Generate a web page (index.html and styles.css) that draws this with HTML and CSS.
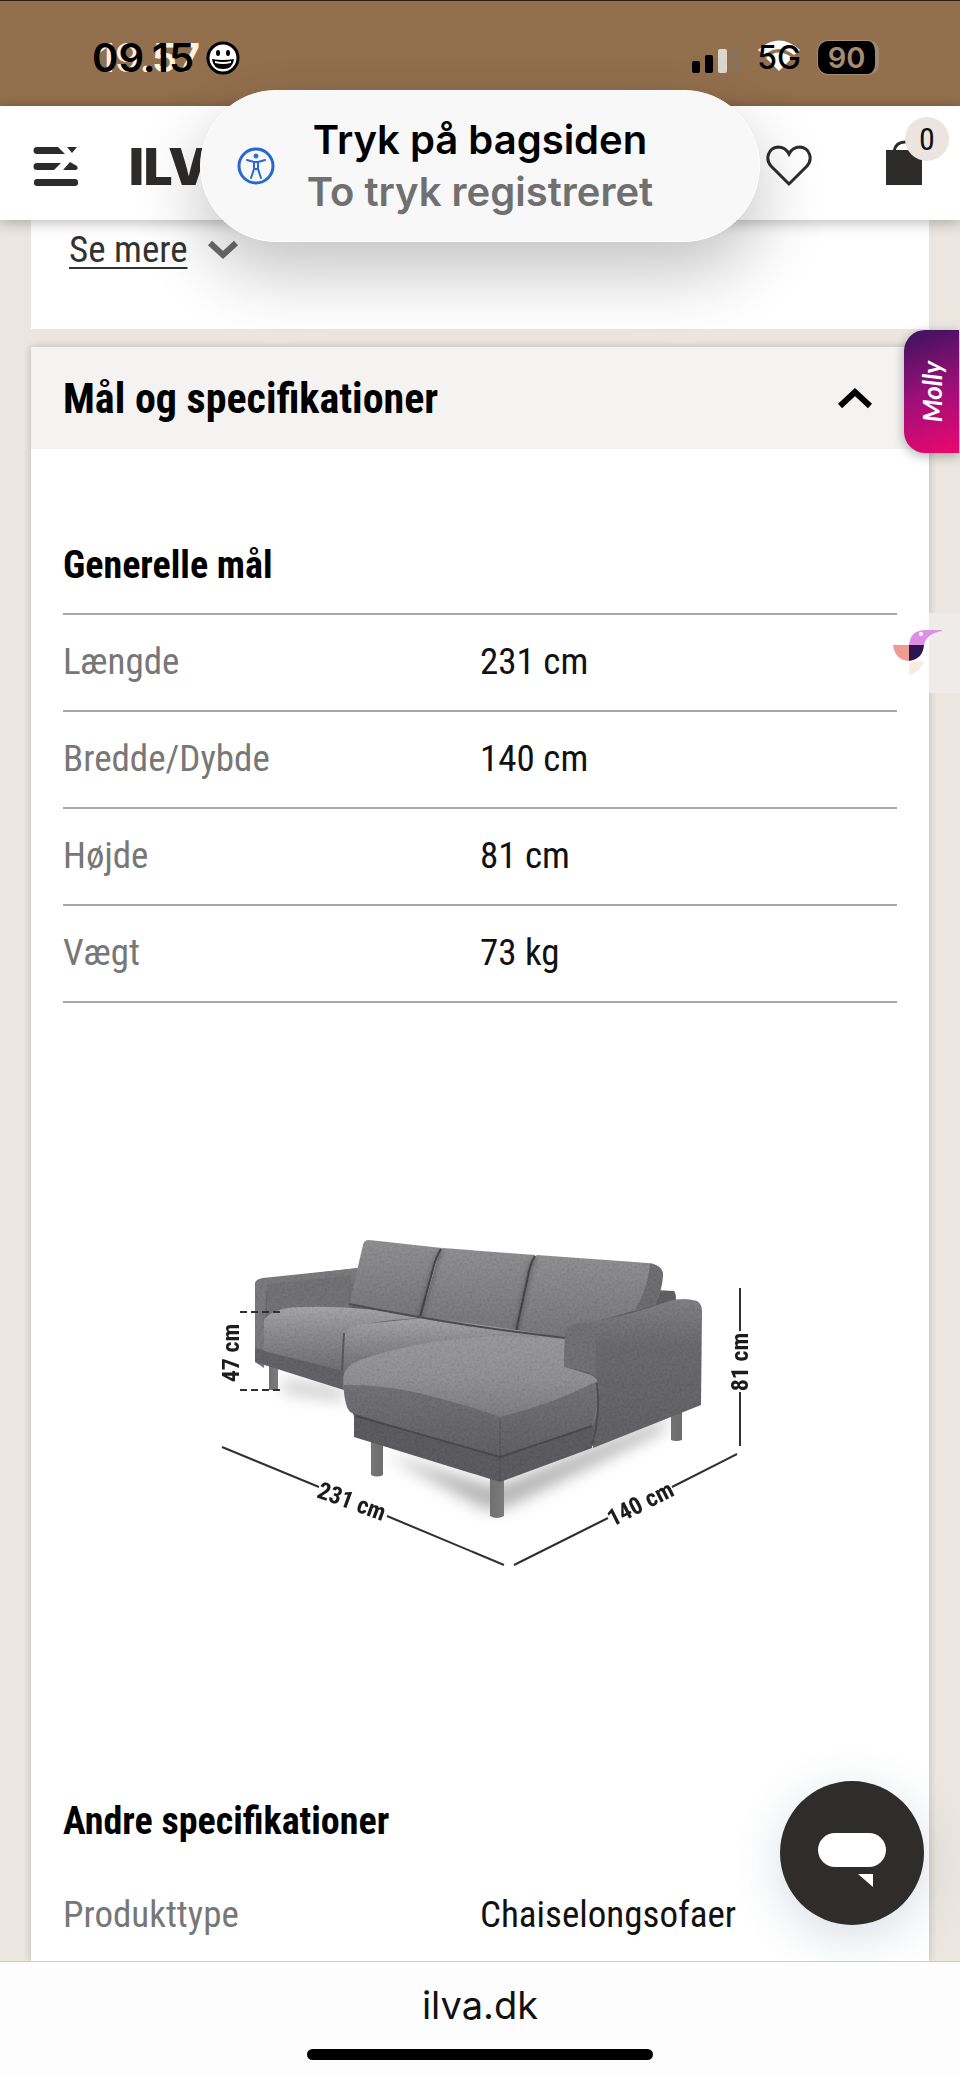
FILE: index.html
```html
<!DOCTYPE html>
<html lang="da">
<head>
    <meta charset="UTF-8">
    <meta name="viewport" content="width=device-width, initial-scale=1.0">
    <title>ILVA - Mål og specifikationer</title>
    <link rel="stylesheet" href="styles.css">
</head>
<body>
    <div class="status-bar">
        <div class="status-left">
            <span class="time"><span class="time-ghost" aria-hidden="true">19.57</span><span class="time-now">09.15</span></span>
            <svg class="smiley" viewBox="0 0 34 34" aria-hidden="true">
                <circle cx="17" cy="17" r="15" fill="#fff" stroke="#000" stroke-width="3"/>
                <ellipse cx="12" cy="12" rx="2" ry="3"/>
                <ellipse cx="22" cy="12" rx="2" ry="3"/>
                <path d="M6 18q11 2 22 0q-1 10-11 10T6 18z"/>
                <path d="M9 20q8 2 16 0v2q-8 2-16 0z" fill="#fff"/>
            </svg>
        </div>
        <div class="status-right">
            <svg class="signal" viewBox="0 0 50 32" aria-hidden="true">
                <rect x="1" y="19" width="8" height="12" rx="2"/>
                <rect x="14" y="13" width="8" height="18" rx="2"/>
                <rect x="27" y="7" width="9" height="24" rx="2" fill="#dcd7cd"/>
                <rect x="41" y="1" width="8" height="30" rx="2" fill="#8b7156"/>
            </svg>
            <span class="network">
                <svg class="wifi" viewBox="0 0 44 32" aria-hidden="true">
                    <path d="M1 10Q22-9 43 10L37 15Q22 3 7 15z" fill="#fff"/>
                    <path d="M9 18q13-11 26 0L22 31z" fill="#fff"/>
                </svg>
                <span class="network-label">5G</span>
            </span>
            <span class="battery">90</span>
        </div>
    </div>

    <header class="site-header">
        <button type="button" class="icon-button" aria-label="Menu">
            <svg width="46" height="40" viewBox="0 0 46 40" fill="#2d2c2b">
                <path d="M4 1h21l7 7H4a3 3 0 0 1 0-7zM34 1h10l-5 6z"/>
                <path d="M4 17h24l-7 7H4a3 3 0 0 1 0-7zM37 16l7 4q2 4-2 4H30z"/>
                <rect x="1" y="33" width="44" height="7" rx="3"/>
            </svg>
        </button>
        <a href="#" class="logo">ILVA</a>
        <button type="button" class="icon-button wishlist" aria-label="Ønskeliste">
            <svg width="46" height="42" viewBox="0 0 46 42" fill="none" stroke="#2d2c2b" stroke-width="3">
                <path d="M23 39L5 21C-1 14 2 3 12 2c5 0 9 3 11 7c2-4 6-7 11-7c10 1 13 12 7 19z"/>
            </svg>
        </button>
        <button type="button" class="icon-button cart" aria-label="Kurv">
            <svg width="36" height="46" viewBox="0 0 36 46">
                <rect y="11" width="36" height="35" fill="#2d2c2b"/>
                <path d="M8 12q2-9 11-9q8 0 10 9" fill="none" stroke="#2d2c2b" stroke-width="3"/>
            </svg>
            <span class="cart-count">0</span>
        </button>
    </header>

    <main class="page">
        <section class="card description">
            <a href="#" class="see-more">Se mere</a>
            <svg width="32" height="22" viewBox="0 0 32 22" fill="none" stroke="#6d6d6d" stroke-width="6" aria-hidden="true">
                <path d="M3 4l13 12L29 4"/>
            </svg>
        </section>

        <section class="card specs">
            <h2 class="accordion">
                <button type="button" class="accordion-button" aria-expanded="true">
                    Mål og specifikationer
                    <svg width="34" height="22" viewBox="0 0 34 22" fill="none" stroke="#000" stroke-width="6" aria-hidden="true">
                        <path d="M2 19L17 5l15 14"/>
                    </svg>
                </button>
            </h2>
            <div class="accordion-content">
                <h3>Generelle mål</h3>
                <table class="spec-table lined">
                    <tr><th scope="row">Længde</th><td>231 cm</td></tr>
                    <tr><th scope="row">Bredde/Dybde</th><td>140 cm</td></tr>
                    <tr><th scope="row">Højde</th><td>81 cm</td></tr>
                    <tr><th scope="row">Vægt</th><td>73 kg</td></tr>
                </table>

                <figure class="drawing">
                    <svg viewBox="190 1220 580 360" role="img" aria-label="Sofa med mål">
                        <defs>
                            <linearGradient id="cushion" x1="0" y1="0" x2="0" y2="1">
                                <stop offset="0" stop-color="#919193"/>
                                <stop offset="1" stop-color="#78787b"/>
                            </linearGradient>
                            <linearGradient id="seat" x1="0" y1="0" x2="0" y2="1">
                                <stop offset="0" stop-color="#a6a6a8"/>
                                <stop offset="0.4" stop-color="#8e8e90"/>
                                <stop offset="1" stop-color="#6f6f72"/>
                            </linearGradient>
                            <linearGradient id="chaise" x1="0" y1="0" x2="0" y2="1">
                                <stop offset="0" stop-color="#9a9a9c"/>
                                <stop offset="0.35" stop-color="#929294"/>
                                <stop offset="0.65" stop-color="#808083"/>
                                <stop offset="1" stop-color="#66666a"/>
                            </linearGradient>
                            <linearGradient id="arm" x1="0" y1="0" x2="0" y2="1">
                                <stop offset="0" stop-color="#828285"/>
                                <stop offset="0.3" stop-color="#6c6c6f"/>
                                <stop offset="1" stop-color="#626265"/>
                            </linearGradient>
                            <linearGradient id="leg">
                                <stop offset="0" stop-color="#707070"/>
                                <stop offset="0.4" stop-color="#a9a9a9"/>
                                <stop offset="1" stop-color="#6c6c6c"/>
                            </linearGradient>
                            <filter id="soft" x="-20%" y="-20%" width="140%" height="140%">
                                <feGaussianBlur stdDeviation="8"/>
                            </filter>
                            <filter id="crease" x="-20%" y="-20%" width="140%" height="140%">
                                <feGaussianBlur stdDeviation="2"/>
                            </filter>
                            <filter id="fabric" x="0" y="0" width="100%" height="100%">
                                <feTurbulence type="fractalNoise" baseFrequency="0.4" numOctaves="2" result="noise"/>
                                <feColorMatrix in="noise" values="0 0 0 0 0  0 0 0 0 0  0 0 0 0 0  0.4 0 0 0 -0.15" result="grain"/>
                                <feComposite in="grain" in2="SourceGraphic" operator="in" result="weave"/>
                                <feMerge><feMergeNode in="SourceGraphic"/><feMergeNode in="weave"/></feMerge>
                            </filter>
                        </defs>

                        <!-- floor shadow -->
                        <g filter="url(#soft)" fill="#000">
                            <path d="M282 1380l62 8v14l-60-8z" opacity="0.2"/>
                            <path d="M385 1455l110 33 175-70-10 15-155 76-20 1z" opacity="0.3"/>
                        </g>

                        <!-- legs -->
                        <g fill="url(#leg)">
                            <path d="M269 1364h9v27h-9zM371 1440h12v36q-6 3-12 0z"/>
                            <path d="M490 1476h14v41q-7 4-14 0zM671 1408h11v33q-6 2-11 0z"/>
                        </g>

                        <g filter="url(#fabric)">
                            <!-- frame under the cushions -->
                            <path d="M258 1290l90-10 120 30 186-14 46 20-2 86-106 45-93 32-140-44-14-49-87-23z" fill="#626265"/>
                            <!-- left arm -->
                            <path d="M255 1284q1-4 8-5l96-10-8 45-86 14v28l-10 4z" fill="url(#arm)"/>
                            <path d="M255 1284q1-3 10-4l92-11-2 5-80 10q-9 2-9 8l-2 77-9-6z" fill="#7b7b7e"/>
                            <path d="M267 1286l83-10-1 32-70 2-12 8z" fill="#737376"/>
                            <!-- back frame -->
                            <path d="M654 1291l20 1q2 2 2 10l-24 6z" fill="#626265"/>
                            <!-- back cushions -->
                            <path d="M369 1241l73 8q-5 8-8 20l-13 49-72-12 14-60q1-5 6-5z" fill="url(#cushion)"/>
                            <path d="M443 1249l92 7-7 18-11 58q-48-7-96-14l17-61q1-7 5-8z" fill="url(#cushion)"/>
                            <path d="M537 1256l111 8q15 2 15 12-1 16-8 30l-58 16-31 18-50-6 14-67q2-9 7-11z" fill="url(#cushion)"/>
                            <path d="M650 1264q13 3 13 12-1 16-8 30l-20 5q14-25 15-47z" fill="#656568" opacity="0.7"/>
                            <path d="M441 1250q-5 8-8 20l-13 48M535 1257q-5 8-7 20l-12 56" fill="none" stroke="#4b4b4d" stroke-width="2"/>
                            <path d="M441 1252q-5 8-8 20l-13 46M535 1259q-5 8-7 20l-12 54" fill="none" stroke="#3c3c3e" stroke-width="5" opacity="0.4" filter="url(#crease)"/>
                            <!-- seats -->
                            <path d="M255 1349l89 20v22l-89-28z" fill="#646467"/>
                            <path d="M264 1321q8-13 40-13 60-2 117 11-70 4-77 16v37l-80-20z" fill="url(#seat)"/>
                            <path d="M344 1338q0-10 20-13l58-6q54 5 144 20l-120 16-102 20z" fill="url(#seat)"/>
                            <path d="M344 1334l-2 37" stroke="#5a5a5c" stroke-width="2"/>
                            <path d="M349 1305q90 18 168 28l48 6" fill="none" stroke="#505052" stroke-width="2"/>
                            <!-- chaise longue -->
                            <path d="M354 1412l146 44 92-31v24l-92 34-146-45z" fill="#5d5d60"/>
                            <path d="M343 1382q0-15 17-21 60-21 145-24l61 3v28l25 8q8 3 8 14 1 15-6 36l-93 32q-70-19-147-44-9 0-10-36z" fill="url(#chaise)"/>
                            <path d="M344 1386q34-1 75 8 48 12 81 24 50-12 98-36 2 20-6 44l-92 31-147-42q-9-8-9-29z" fill="#5d5d60" opacity="0.55"/>
                            <path d="M356 1417l144 41 92-31" fill="none" stroke="#4c4c4e" stroke-width="2"/>
                            <path d="M500 1420v62" stroke="#48484a" stroke-width="2" opacity="0.3"/>
                            <!-- right arm -->
                            <path d="M564 1368l1-33q2-9 12-11 43-4 92-22 15-4 28 0 5 3 5 10l-1 94-108 43 1-20q5-24 5-42-1-9-9-13z" fill="url(#arm)"/>
                            <path d="M564 1368l1-33q2-8 12-10 14-1 17 7 3 13 1 45-9-6-31-9z" fill="#727275"/>
                            <path d="M597 1384q4 32-5 62" fill="none" stroke="#505052" stroke-width="2"/>
                        </g>

                        <!-- measuring lines -->
                        <g fill="none" stroke="#303030" stroke-width="2">
                            <path d="M240 1313h40M240 1391h40" stroke-dasharray="7 4"/>
                            <path d="M222 1448l97 40M387 1517l117 49M514 1566l94-47M672 1488l65-33M740 1289v43M740 1393v54"/>
                        </g>
                        <g class="measure">
                            <text transform="translate(239 1354) rotate(-90)">47 cm</text>
                            <text transform="translate(349 1510) rotate(20)">231 cm</text>
                            <text transform="translate(644 1512) rotate(-27)">140 cm</text>
                            <text transform="translate(748 1363) rotate(-90)">81 cm</text>
                        </g>
                    </svg>
                </figure>

                <h3>Andre specifikationer</h3>
                <table class="spec-table">
                    <tr><th scope="row">Produkttype</th><td>Chaiselongsofaer</td></tr>
                </table>
            </div>
        </section>

        <button type="button" class="molly-tab"><span>Molly</span></button>
        <div class="bird-tab">
            <svg width="50" height="48" viewBox="0 0 50 48" aria-hidden="true">
                <path d="M0 15h16v16Q2 30 0 15z" fill="#ef9a94"/>
                <path d="M16 15h15q-1 14-15 16z" fill="#2b1650"/>
                <path d="M16 15Q17 0 33 0h16v1q-15 2-18 14z" fill="#dd90e2"/>
                <circle cx="28" cy="4" r="2" fill="#fff"/>
                <path d="M16 33l15-2q-3 10-15 15z" fill="#f8ece0"/>
            </svg>
        </div>
        <button type="button" class="chat-button" aria-label="Chat">
            <svg width="68" height="54" viewBox="0 0 68 54" fill="#fff">
                <rect width="68" height="34" rx="17"/>
                <path d="M40 41h15v13z"/>
            </svg>
        </button>
    </main>

    <footer class="browser-bar">
        <a href="#" class="address">ilva.dk</a>
        <div class="home-indicator"></div>
    </footer>

    <div class="notification" role="status">
        <svg class="notification-icon" width="38" height="38" viewBox="0 0 38 38" fill="none" stroke="#2967d2" aria-hidden="true">
            <circle cx="19" cy="19" r="17" stroke-width="3"/>
            <circle cx="19" cy="9" r="2" fill="#2967d2"/>
            <path d="M10 13l7 2v7l-3 9M28 13l-7 2v7l3 9M17 15h4M17 22h4" stroke-width="2" stroke-linecap="round"/>
        </svg>
        <div class="notification-text">
            <strong>Tryk på bagsiden</strong>
            <span>To tryk registreret</span>
        </div>
    </div>
</body>
</html>
```
FILE: styles.css
```css
* {
    box-sizing: border-box;
}
body {
    display: flex;
    flex-direction: column;
    min-height: 100vh;
    margin: 0;
    position: relative;
    background: #ebe6df;
    color: #111;
    font-family: "Liberation Sans Narrow", "Arial Narrow", "Roboto Condensed", "Liberation Sans", sans-serif;
    font-size: 37px;
}
button {
    padding: 0;
    border: none;
    background: none;
    font: inherit;
    color: inherit;
    cursor: pointer;
}
svg {
    display: block;
}

/* phone status bar */
.status-bar {
    display: flex;
    justify-content: space-between;
    align-items: center;
    height: 106px;
    padding: 8px 81px 0 92px;
    border-top: 1px solid #35150f;
    background: #926f4d;
    color: #000;
    font-family: Inter, "Liberation Sans", sans-serif;
    font-weight: 600;
}
.status-left,
.status-right {
    display: flex;
    align-items: center;
}
.status-left {
    gap: 12px;
}
.status-right {
    gap: 16px;
}
.time {
    position: relative;
    font-size: 40px;
}
.time-now {
    position: relative;
}
.time-ghost {
    position: absolute;
    left: 6px;
    color: #fff3e0;
}
.smiley {
    width: 34px;
    height: 34px;
}
.signal {
    width: 50px;
    height: 32px;
}
.network {
    position: relative;
    font-size: 32px;
    font-weight: 500;
}
.network-label {
    position: relative;
}
.wifi {
    position: absolute;
    top: 2px;
    left: 0;
    width: 44px;
    height: 32px;
}
.battery {
    width: 62px;
    border: 1px solid #a58c72;
    border-right: 4px solid #9c8972;
    border-radius: 11px;
    background: #000;
    color: #a58c72;
    font-size: 29px;
    line-height: 33px;
    text-align: center;
}

/* shop header */
.site-header {
    display: flex;
    align-items: center;
    height: 114px;
    padding: 6px 38px 0 33px;
    position: relative;
    z-index: 1;
    background: #fff;
    box-shadow: 0 2px 14px rgba(0, 0, 0, 0.3);
}
.logo {
    margin-left: 50px;
    color: #2d2c2b;
    font-family: Inter, "Liberation Sans", sans-serif;
    font-size: 51px;
    font-weight: 900;
    text-decoration: none;
}
.wishlist {
    margin-left: auto;
}
.cart {
    position: relative;
    margin-left: 74px;
    padding-bottom: 8px;
}
.cart-count {
    position: absolute;
    top: -22px;
    left: 19px;
    width: 44px;
    height: 44px;
    border-radius: 50%;
    background: #ebe4df;
    font-size: 32px;
    line-height: 44px;
}

/* page */
.page {
    display: flex;
    flex: 1;
    flex-direction: column;
    position: relative;
    padding: 0 31px;
}
.card {
    background: #fff;
    box-shadow: 0 0 8px rgba(0, 0, 0, 0.2);
}
.description {
    display: flex;
    align-items: center;
    gap: 19px;
    height: 109px;
    padding: 0 38px 50px;
    margin-bottom: 18px;
    box-shadow: none;
}
.see-more {
    color: #333;
    text-decoration-thickness: 2px;
    text-underline-offset: 5px;
}
.specs {
    flex: 1;
}
.accordion {
    margin: 0;
}
.accordion-button {
    display: flex;
    justify-content: space-between;
    align-items: center;
    width: 100%;
    height: 102px;
    padding: 0 57px 0 32px;
    background: #f4f3f2;
    color: #000;
    font-size: 42px;
    font-weight: bold;
}
.accordion-content {
    padding: 90px 32px 0;
}
h3 {
    margin: 0 0 22px;
    color: #000;
    font-size: 38px;
    line-height: 52px;
}
.spec-table {
    width: 100%;
    border-collapse: collapse;
    table-layout: fixed;
}
.spec-table th,
.spec-table td {
    width: 50%;
    height: 92px;
    padding: 0 0 2px;
    text-align: left;
}
.spec-table th {
    color: #777;
    font-weight: normal;
}
.lined {
    border-top: 2px solid #a6a6a6;
}
.lined tr {
    border-bottom: 2px solid #a6a6a6;
}
.lined th,
.lined td {
    height: 97px;
}
.drawing {
    max-width: 580px;
    margin: 216px auto;
}
.measure text {
    fill: #1c1c1c;
    font-size: 24px;
    font-weight: bold;
    text-anchor: middle;
}

/* floating buttons */
.molly-tab {
    display: flex;
    justify-content: center;
    align-items: center;
    position: absolute;
    top: 110px;
    right: 1px;
    width: 55px;
    height: 123px;
    border-radius: 21px 0 0 21px;
    background: linear-gradient(160deg, #4b1263 10%, #9c0f78 50%, #e4086f 95%);
    box-shadow: 0 3px 12px rgba(0, 0, 0, 0.3);
    color: #fff;
    font-family: Lato, sans-serif;
    font-size: 26px;
    font-style: italic;
    font-weight: bold;
}
.molly-tab span {
    writing-mode: vertical-rl;
    transform: rotate(180deg);
}
.bird-tab {
    position: absolute;
    top: 393px;
    right: 0;
    width: 67px;
    height: 80px;
    padding-top: 17px;
    background: linear-gradient(90deg, transparent 36px, #eeebea 36px);
}
.chat-button {
    display: flex;
    justify-content: center;
    align-items: center;
    position: absolute;
    right: 36px;
    bottom: 36px;
    width: 144px;
    height: 144px;
    padding-top: 14px;
    border-radius: 50%;
    background: #2f2d2c;
    box-shadow: 0 12px 50px rgba(60, 90, 110, 0.2);
}

/* browser bar */
.browser-bar {
    display: flex;
    flex-direction: column;
    align-items: center;
    justify-content: space-between;
    position: relative;
    height: 117px;
    padding: 20px 0 18px;
    border-top: 1px solid #ccc;
    background: #fdfdfd;
}
.address {
    color: #111;
    font-family: Inter, "Liberation Sans", sans-serif;
    font-size: 38px;
    text-decoration: none;
}
.home-indicator {
    width: 36%;
    height: 11px;
    border-radius: 6px;
    background: #000;
}

/* system notification over the header */
.notification {
    display: flex;
    align-items: center;
    position: absolute;
    z-index: 2;
    top: 90px;
    left: 50%;
    width: 560px;
    height: 152px;
    padding: 0 36px;
    transform: translateX(-50%);
    border: 1px solid #fff;
    border-radius: 76px;
    background: #f8f8f8;
    box-shadow: 0 30px 70px rgba(0, 0, 0, 0.24);
    font-family: Inter, "Liberation Sans", sans-serif;
    font-size: 40px;
    line-height: 52px;
}
.notification-text {
    display: flex;
    flex: 1;
    flex-direction: column;
    align-items: center;
    padding-right: 38px;
}
.notification-text strong {
    color: #000;
    font-weight: 600;
}
.notification-text span {
    color: #707070;
    font-weight: 600;
}
```
